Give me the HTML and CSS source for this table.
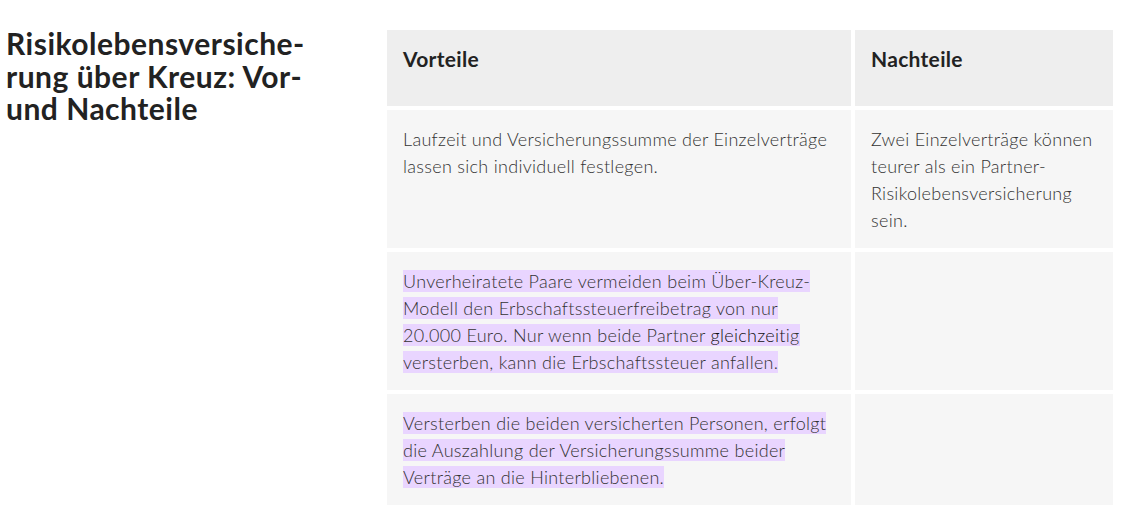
FILE: index.html
```html
<!DOCTYPE html>
<html lang="de">
<head>
<meta charset="utf-8">
<link rel="stylesheet" href="styles.css">
</head>
<body>
<div class="page">
  <h2 class="title">Risikolebensversiche-<br>rung über Kreuz: Vor-<br>und Nachteile</h2>
  <div class="table">
    <div class="th">Vorteile</div>
    <div class="th">Nachteile</div>
    <div class="td">Laufzeit und Versicherungssumme der Einzelverträge lassen sich individuell festlegen.</div>
    <div class="td">Zwei Einzelverträge können teurer als ein Partner-Risikolebensversicherung sein.</div>
    <div class="td"><span class="mark">Unverheiratete Paare vermeiden beim Über-Kreuz-Modell den Erbschaftssteuerfreibetrag von nur 20.000 Euro. Nur wenn beide Partner <span class="dark">gleichzeit</span>ig versterben, kann die Erbschaftssteuer anfallen.</span></div>
    <div class="td"></div>
    <div class="td"><span class="mark">Versterben die beiden versicherten Personen, erfolgt die Auszahlung der Versicherungssumme beider Verträge an die Hinterbliebenen.</span></div>
    <div class="td"></div>
  </div>
</div>
</body>
</html>
```

FILE: styles.css
```css
html, body {
  margin: 0;
  padding: 0;
  background: #ffffff;
}
.page {
  display: flex;
  align-items: flex-start;
  padding: 30px 0 0 6px;
}
.title {
  width: 381px;
  flex: none;
  margin: -3px 0 0 0;
  font-family: "Lato", sans-serif;
  font-weight: 700;
  font-size: 30px;
  line-height: 32.5px;
  letter-spacing: 0.5px;
  color: #222222;
}
.table {
  display: grid;
  grid-template-columns: 464px 258px;
  gap: 4px;
}
.th {
  background: #eeeeee;
  padding: 15px 16px 34px 16px;
  font-family: "Lato", sans-serif;
  font-weight: 700;
  font-size: 21px;
  line-height: 27px;
  letter-spacing: 0.3px;
  color: #222222;
}
.td {
  background: #f6f6f6;
  padding: 16px 16px 14px 16px;
  font-family: "Lato", sans-serif;
  font-weight: 300;
  font-size: 18px;
  line-height: 27px;
  letter-spacing: 0.3px;
  color: #333333;
}
.mark {
  background: #e9d5ff;
}
.dark {
  color: #111111;
}
```
